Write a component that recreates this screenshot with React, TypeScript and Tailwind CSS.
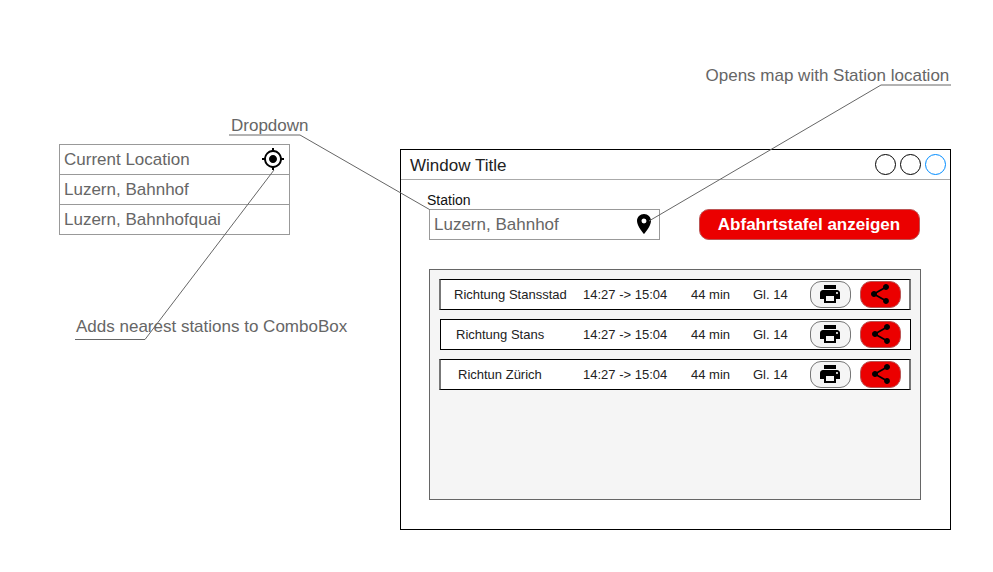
import { MdMyLocation, MdPlace, MdPrint, MdShare } from "react-icons/md";

const connections = [
  { name: "Richtung Stansstad", row: "w-[472px] -ml-px border-x-2 border-x-[#777]", indent: "pl-[13px]", share: "pr-px" },
  { name: "Richtung Stans", row: "w-[471px] border-x border-x-black", indent: "pl-[15px]", share: "pl-px" },
  { name: "Richtun Zürich", row: "w-[472px] -ml-px border-x-2 border-x-[#777]", indent: "pl-[17px]", share: "pl-px" },
];

function StationList() {
  return (
    <div className="absolute left-[59px] top-[144px] flex h-[91px] w-[231px] flex-col divide-y divide-[#999] border border-[#999] text-[17px] text-[#666]">
      <div className="flex h-[30px] items-center justify-between pl-1 pr-1">
        <span>Current Location</span>
        <MdMyLocation className="mb-0.5 size-6 text-black" />
      </div>
      <div className="flex h-[30px] items-center pl-1">Luzern, Bahnhof</div>
      <div className="flex h-[29px] items-center pl-1">Luzern, Bahnhofquai</div>
    </div>
  );
}

function ConnectionRow({ item }: { item: (typeof connections)[number] }) {
  return (
    <div className={`flex h-[31px] shrink-0 items-center border-y border-y-black bg-white text-[13px] text-[#222] ${item.row}`}>
      <span className={`w-[142px] whitespace-nowrap ${item.indent}`}>{item.name}</span>
      <span className="w-[107px]">14:27 -&gt; 15:04</span>
      <span className="w-[63px] pl-px">44 min</span>
      <span className="w-[57px]">Gl. 14</span>
      <button className="flex h-[27px] w-[41px] items-center justify-center rounded-[11px] border border-[#777] bg-[#f5f5f5] pr-px text-black">
        <MdPrint className="mb-0.5 size-6" />
      </button>
      <button className={`ml-[9px] flex h-[27px] w-[41px] items-center justify-center rounded-[11px] border border-[#b55] bg-[#eb0000] text-black ${item.share}`}>
        <MdShare className="mb-0.5 size-6" />
      </button>
    </div>
  );
}

function AppWindow() {
  return (
    <div className="absolute left-[400px] top-[149px] flex h-[381px] w-[551px] flex-col border border-black bg-white">
      <div className="flex h-[30px] shrink-0 items-center justify-between border-b border-[#aaa] pl-[9px] pr-1 text-[17px] text-[#222]">
        <span className="pt-0.5">Window Title</span>
        <div className="flex gap-1">
          <i className="size-[21px] rounded-full border border-black" />
          <i className="size-[21px] rounded-full border border-black" />
          <i className="size-[21px] rounded-full border border-[#008cff]" />
        </div>
      </div>
      <div className="flex flex-col pl-7 pt-[11px]">
        <div className="-ml-0.5 h-[18px] text-[14px] leading-[18px] text-[#111]">Station</div>
        <div className="flex gap-[39px]">
          <div className="flex h-[31px] w-[231px] items-center justify-between border border-[#999] pl-1 pr-[3px] text-[17px] text-[#666]">
            <span>Luzern, Bahnhof</span>
            <MdPlace className="mb-0.5 size-6 text-black" />
          </div>
          <button className="h-[31px] w-[221px] rounded-[10px] border border-[#b55] bg-[#eb0000] pr-px text-[17px] font-bold text-white">
            Abfahrtstafel anzeigen
          </button>
        </div>
        <div className="mt-[29px] flex h-[231px] w-[492px] flex-col gap-[9px] border border-[#666] bg-[#f5f5f5] pl-2.5 pt-[9px]">
          {connections.map((item) => (
            <ConnectionRow key={item.name} item={item} />
          ))}
        </div>
      </div>
    </div>
  );
}

export default function App() {
  return (
    <main className="relative h-[572px] w-[993px] overflow-hidden bg-white font-['Liberation_Sans',Arial,sans-serif]">
      <StationList />
      <AppWindow />
      <svg className="absolute inset-0" width="993" height="572" fill="none" stroke="#666" strokeWidth="1">
        <path d="M300 135L429.500 209.500M881 85L649 221M274 170L145 339.500H75" />
        <path d="M229 135H300M951 85H881" />
      </svg>
      <p className="absolute left-[231px] top-[116px] whitespace-nowrap text-[17px] leading-5 text-[#666]">Dropdown</p>
      <p className="absolute left-[705.5px] top-[66px] whitespace-nowrap text-[17px] leading-5 text-[#666]">Opens map with Station location</p>
      <p className="absolute left-[76px] top-[317px] whitespace-nowrap text-[17px] leading-5 text-[#666]">Adds nearest stations to ComboBox</p>
    </main>
  );
}
